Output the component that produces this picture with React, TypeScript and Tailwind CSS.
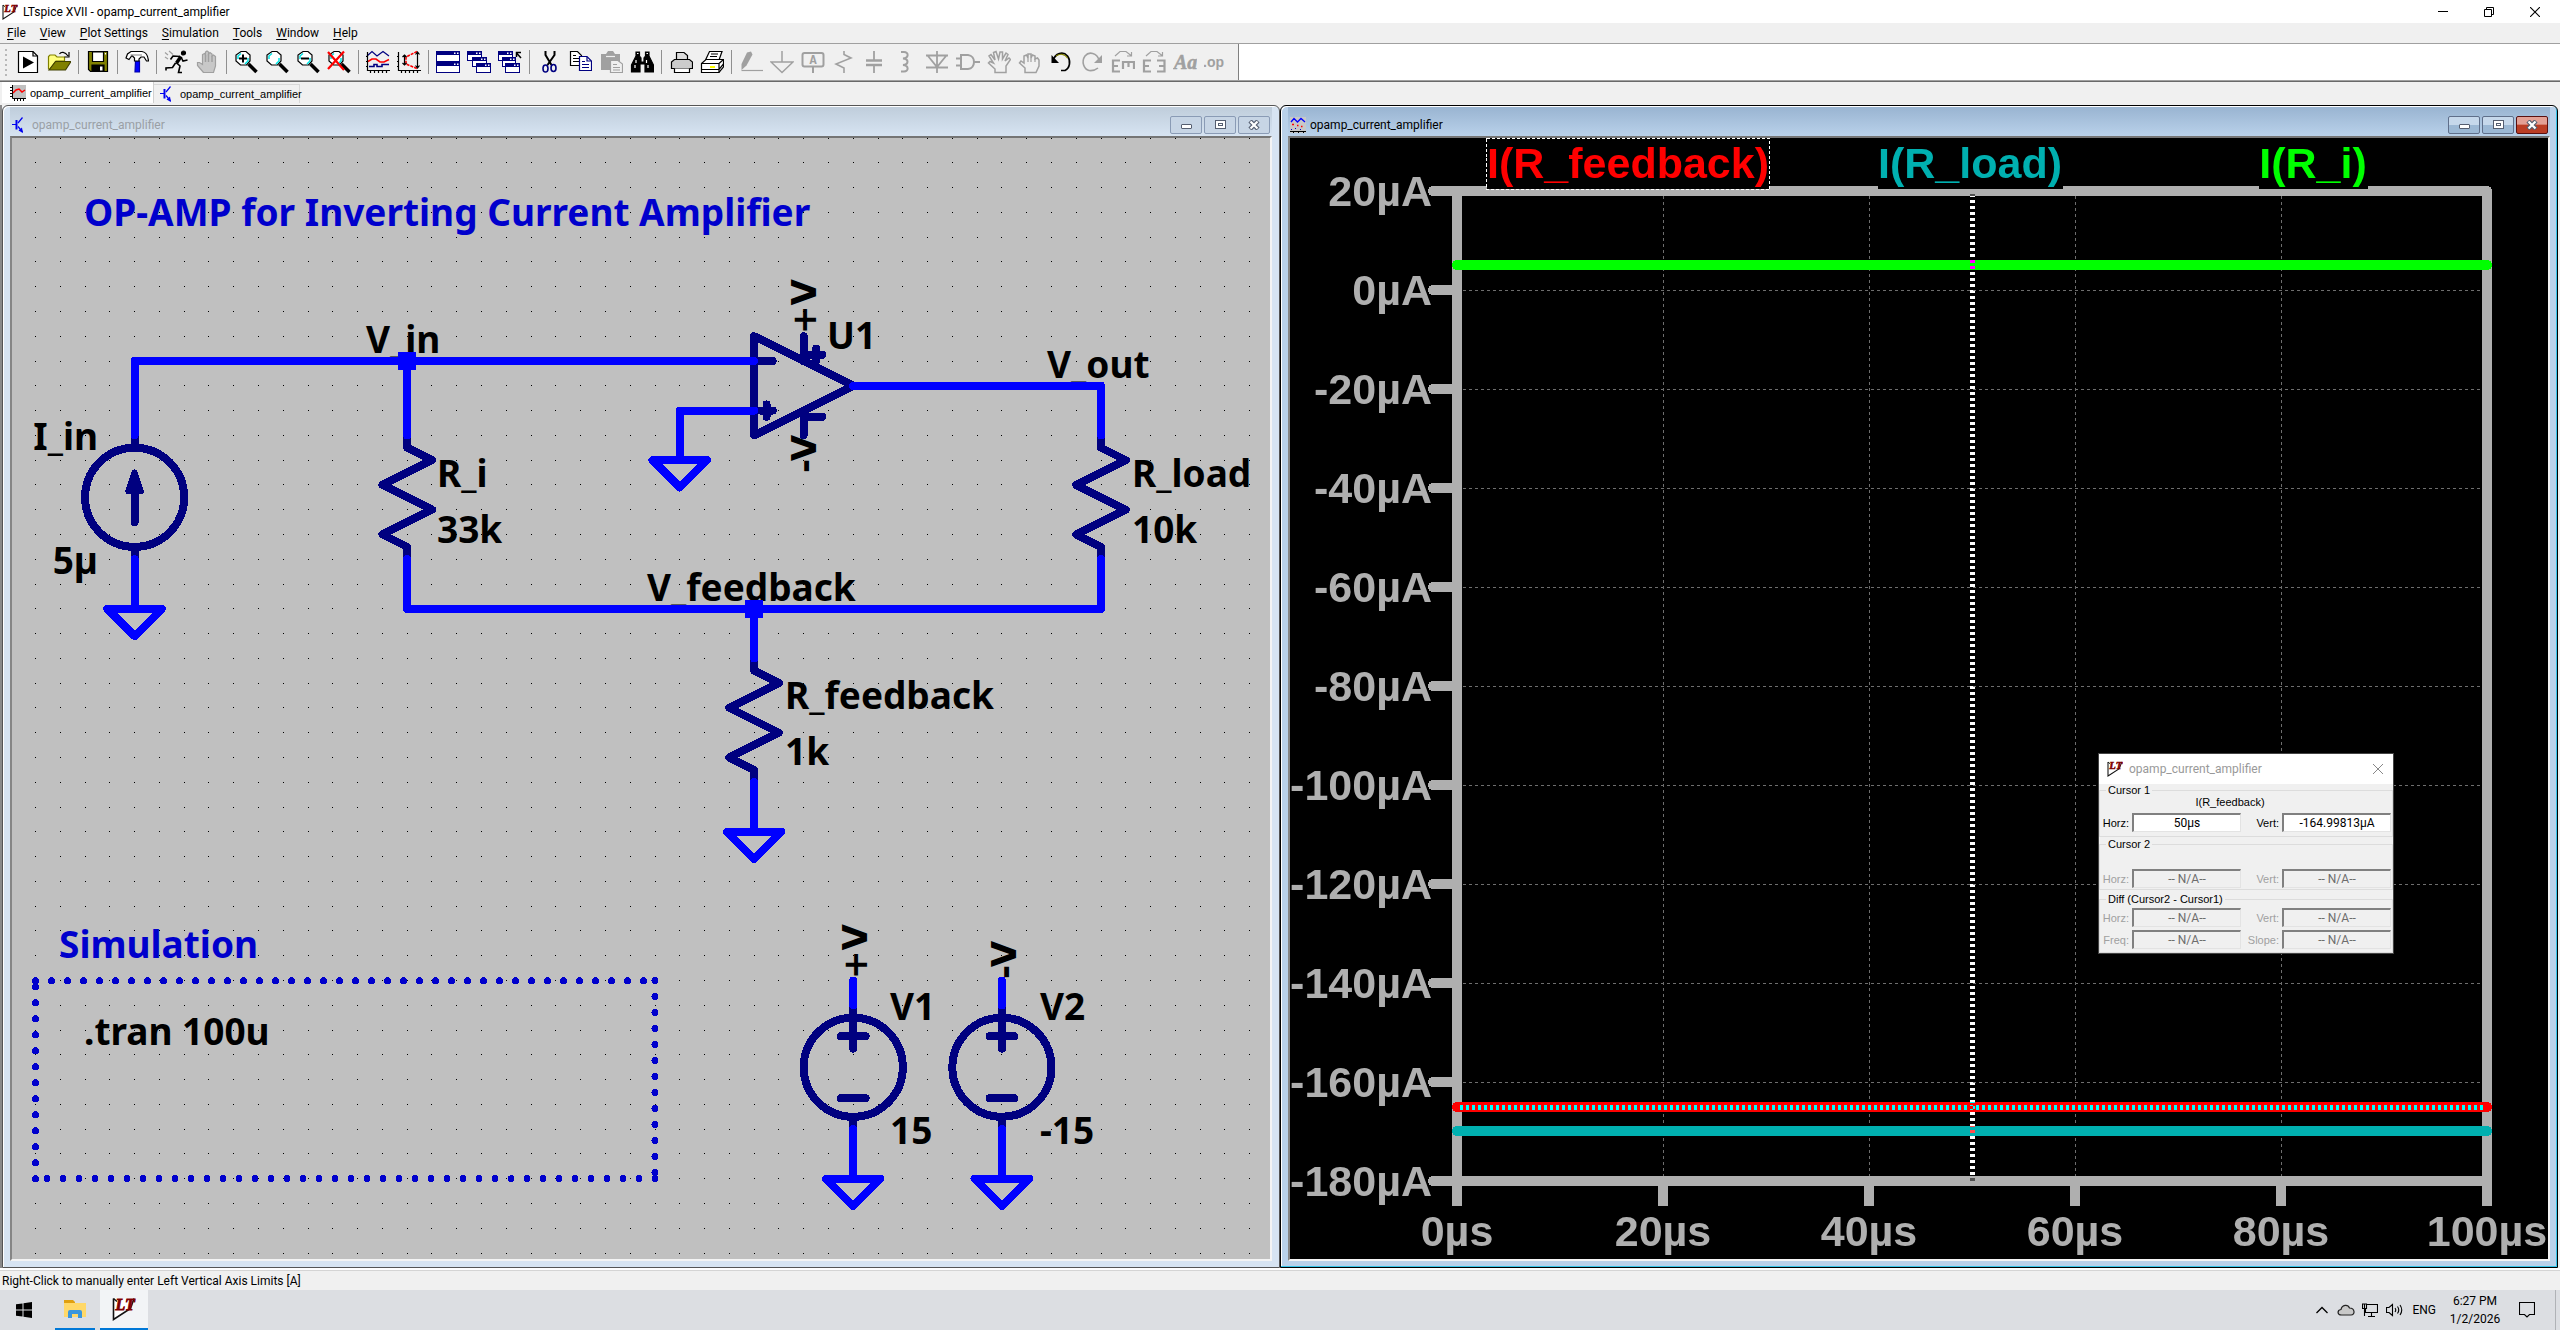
import type { ReactNode } from 'react'

const UI = "font-['Roboto','Open_Sans',sans-serif]"
const SMALL = "font-['Liberation_Sans',sans-serif] text-[11px] leading-[12px]"

/* ---------- Icons ---------- */

function Icon({ children }: { children: ReactNode }) {
  return (
    <svg viewBox="0 0 24 24" className="h-6 w-6 shrink-0" fill="none" stroke="#000" strokeWidth="1.2">
      {children}
    </svg>
  )
}

function LtLogo({ className }: { className: string }) {
  return (
    <svg viewBox="0 0 24 24" className={className} fill="none">
      <path d="M1.500 1.500V22.500L18.500 11.500L22 1.500" stroke="#111" strokeWidth="1.600" fill="#fff" />
      <path d="M1.500 1.500L5 4.500" stroke="#111" strokeWidth="1.400" />
      <text
        x="3.500"
        y="12.500"
        fill="#800000"
        stroke="#800000"
        strokeWidth="0.800"
        fontSize="16"
        fontWeight="700"
        fontStyle="italic"
        fontFamily="Liberation Serif, serif"
      >
        LT
      </text>
    </svg>
  )
}

function TransistorIcon() {
  return (
    <svg viewBox="0 0 16 16" className="h-4 w-4 shrink-0" fill="none" stroke="#0000f0" strokeWidth="1.2">
      <path d="M0 7.500H4M6 6L10.500 0.500M6 9.500L10.500 15" />
      <path d="M4.500 3V12.500" strokeWidth="2" />
      <path d="M11 16L6.500 13.500L10 10.500Z" fill="#0000f0" stroke="none" />
    </svg>
  )
}

function PlotTabIcon() {
  return (
    <svg viewBox="0 0 16 16" className="h-4 w-4 shrink-0" fill="none">
      <path d="M2 0H16V13H2Z" fill="#c0c0c0" />
      <path d="M2.500 0V13.500H16M0 2.500H2M0 5.500H2M0 8.500H2M0 11.500H2M4.500 14V16M7.500 14V16M10.500 14V16M13.500 14V16" stroke="#000" />
      <path d="M3 8L6 5L9 4L12 7L15 5" stroke="#f00" strokeWidth="1.5" />
    </svg>
  )
}

function PlotDocIcon() {
  return (
    <svg viewBox="0 0 16 16" className="h-4 w-4 shrink-0" fill="none">
      <path d="M0 0H16V16H0Z" fill="#c8c8c8" />
      <path d="M1 5L4 1.500L7.500 5L11 1.500L15 5" stroke="#00f" strokeWidth="1.300" />
      <path d="M2 7.500H4M7 8.500H8.500M11 9.500H12.500" stroke="#f00" strokeWidth="1.500" />
      <path d="M1 12.500H2M5 11.500H6M10 12.500H11" stroke="#00c" />
      <path d="M0 14.500H16M3.500 15V16M8.500 15V16M13.500 15V16" stroke="#000" />
    </svg>
  )
}

const GRAY = '#a0a0a0'

function Lens({ children }: { children?: ReactNode }) {
  return (
    <Icon>
      <path d="M7 1.500H12L16 5V11L12.500 15H6.500L2 11V5Z" fill="#fff" />
      <path d="M4 9V6L7 3.500M14 8V11L11 14" stroke="#00e5e5" strokeWidth="1.5" />
      <path d="M14.500 14L22.500 22" strokeWidth="3.500" />
      {children}
    </Icon>
  )
}

function MiniWindow({ x, y, w = 14, h = 9 }: { x: number; y: number; w?: number; h?: number }) {
  return (
    <g transform={`translate(${x} ${y})`} stroke="none">
      <rect width={w} height={h} fill="#000080" />
      <rect x="1" y="4" width={w - 2} height={h - 5} fill="#fff" />
      <path d={`M${w - 6} 1.500h1.500v1.500h-1.500zM${w - 3} 1.500h1.500v1.500h-1.500z`} fill="#fff" />
    </g>
  )
}

type Tool = { name: string; icon: ReactNode; disabled?: boolean }

const toolGroups: Tool[][] = [
  [
    {
      name: 'Run',
      icon: (
        <Icon>
          <path d="M2.500 1.500H17L21.500 6V22.500H2.500Z" fill="#fff" />
          <path d="M17 1.500V6H21.500" />
          <path d="M7 6.500V18.500L18 12.500Z" fill="#000" stroke="none" />
        </Icon>
      ),
    },
    {
      name: 'Open',
      icon: (
        <Icon>
          <path d="M1.500 19V6.500L3 5H8L10 7H17.500V11H9L3 19Z" fill="#ffff80" stroke="#808000" />
          <path d="M2 20L8.500 11.500H24L18.500 20Z" fill="#808000" stroke="#404000" />
          <path d="M12.500 4C14 1.500 18 1.500 21 6M22 2V7H17.500" />
        </Icon>
      ),
    },
  ],
  [
    {
      name: 'Save',
      icon: (
        <Icon>
          <path d="M2.500 1.500H21.500V21.500H4.500L2.500 19.500Z" fill="#808000" />
          <path d="M6.500 2H17.500V11.500H6.500Z" fill="#fff" />
          <path d="M6 15H18V21.500H6Z" fill="#000" />
          <path d="M14 16.500H16.500V20.500H14Z" fill="#fff" stroke="none" />
          <path d="M19.500 3V4.500" stroke="#fff" />
        </Icon>
      ),
    },
  ],
  [
    {
      name: 'Control Panel',
      icon: (
        <Icon>
          <path d="M10.500 11H14.500V22H10Z" fill="#00f" stroke="#00a" />
          <path d="M1 8L2.500 4L6 1.500H17C20.500 2 23 5 23.500 11H21.500L19 7H16L14 9V11H9.500V8L7 5.500L4 9.500Z" fill="#fff" />
          <path d="M5.500 5H17" stroke="#999" />
        </Icon>
      ),
    },
  ],
  [
    {
      name: 'Run simulation',
      icon: (
        <Icon>
          <circle cx="19.500" cy="3" r="2" fill="#000" />
          <path d="M17 6.500L12.500 13" strokeWidth="3.500" />
          <path d="M16 6.500L9 6L6.500 9.500M17 7L19 11L23.500 10M12 12.500L16 16L14.500 22.500H18M11.500 13L8.500 17.500L2 18V20.500" strokeWidth="1.600" />
          <path d="M1 2.500L4 5M5 1L9 4.500M1 7L4 9" stroke={GRAY} />
        </Icon>
      ),
    },
    {
      name: 'Halt',
      disabled: true,
      icon: (
        <Icon>
          <path
            d="M8.500 22.500L2.500 15.500V12.500H4.500L7.500 14.500V4.500L9.500 3.500L10.500 5V2L12 1L13.500 2V4L15 2.500L17 4V6L18.500 5L20.500 6.500V16L18.500 22.500Z"
            fill="#c8c8c8"
            stroke={GRAY}
          />
          <path d="M10.500 5V12M13.500 4V12M17 6V12" stroke={GRAY} strokeWidth="1.500" />
        </Icon>
      ),
    },
  ],
  [
    {
      name: 'Zoom in',
      icon: (
        <Lens>
          <path d="M9 4.500V12.500M5 8.500H13" strokeWidth="2" />
        </Lens>
      ),
    },
    { name: 'Pan', icon: <Lens /> },
    {
      name: 'Zoom back',
      icon: (
        <Lens>
          <path d="M5 8.500H13" strokeWidth="2" />
        </Lens>
      ),
    },
    {
      name: 'Zoom full extents',
      icon: (
        <Lens>
          <path d="M1 2L17 20M17 1.500L1 19" stroke="#f00" strokeWidth="2.200" />
        </Lens>
      ),
    },
  ],
  [
    {
      name: 'Autorange',
      icon: (
        <Icon>
          <path d="M1 6L6 1.500L11 6L17 1.500L23 6" stroke="#000080" />
          <path d="M2 11.500L6 9L10 9L14 12H18L23 9.500" stroke="#f00" strokeWidth="1.600" />
          <path d="M3 16.500H8V14.500H11V16.500H16V14.500H23" stroke="#000080" strokeWidth="1.600" />
          <path d="M1.500 2V20.500H24M0 6.500H2M0 11.500H2M0 16.500H2M4.500 21V23M8.500 21V23M12.500 21V23M16.500 21V23M20.500 21V23" />
        </Icon>
      ),
    },
    {
      name: 'Fit vertical',
      icon: (
        <Icon>
          <path d="M1.500 2V20.500H24M0 6.500H2M0 11.500H2M0 16.500H2M4.500 21V23M8.500 21V23M12.500 21V23M16.500 21V23M20.500 21V23" />
          <path d="M20 1.500L9 7V14L20 18.500" stroke="#f00" strokeWidth="1.600" strokeDasharray="3 1" />
          <path d="M7.500 5V15M5.500 7L7.500 5L9.500 7M5.500 13L7.500 15L9.500 13M20.500 2V18M18.500 4.500L20.500 2L22.500 4.500M18.500 15.500L20.500 18L22.500 15.500" />
        </Icon>
      ),
    },
  ],
  [
    {
      name: 'Tile',
      icon: (
        <Icon>
          <MiniWindow x={0} y={1} w={24} h={11} />
          <MiniWindow x={0} y={12} w={24} h={11} />
        </Icon>
      ),
    },
    {
      name: 'Cascade',
      icon: (
        <Icon>
          <MiniWindow x={0} y={1} w={15} h={10} />
          <MiniWindow x={5} y={7} w={15} h={10} />
          <MiniWindow x={9} y={13} w={15} h={10} />
        </Icon>
      ),
    },
    {
      name: 'Close all',
      icon: (
        <Icon>
          <MiniWindow x={0} y={1} w={15} h={10} />
          <MiniWindow x={4} y={7} w={14} h={10} />
          <MiniWindow x={7} y={13} w={15} h={10} />
          <path d="M23 8L18.500 3M18.500 7V2.500H23" strokeWidth="1.500" />
        </Icon>
      ),
    },
  ],
  [
    {
      name: 'Cut',
      icon: (
        <Icon>
          <path d="M8.500 1V5L14.500 15M17.500 1V5L10.500 15" strokeWidth="2" />
          <ellipse cx="8.500" cy="18.500" rx="2.500" ry="3.500" stroke="#000080" strokeWidth="1.600" />
          <ellipse cx="16.500" cy="18" rx="2.500" ry="3.500" stroke="#000080" strokeWidth="1.600" />
        </Icon>
      ),
    },
    {
      name: 'Copy',
      icon: (
        <Icon>
          <path d="M2.500 1.500H9.500L13.500 5.500V15.500H2.500Z" fill="#fff" />
          <path d="M5 5.500H8M5 8.500H11M5 11.500H11" />
          <path d="M11.500 6.500H19L23.500 11V20.500H11.500Z" fill="#fff" stroke="#000080" />
          <path d="M19 7V11H23M14 11.500H17M14 14.500H21M14 17.500H21" stroke="#000080" />
        </Icon>
      ),
    },
    {
      name: 'Paste',
      disabled: true,
      icon: (
        <Icon>
          <path d="M2 4H7L9 1H14L16 4H21V20H2Z" fill={GRAY} stroke="none" />
          <path d="M7 6.500H16" stroke="#eee" />
          <path d="M11.500 10.500H19L23.500 14V22.500H11.500Z" fill="#f0f0f0" stroke={GRAY} />
          <path d="M14 14.500H18M14 17.500H21M14 20H21" stroke={GRAY} />
        </Icon>
      ),
    },
    {
      name: 'Find',
      icon: (
        <Icon>
          <path d="M6 2H9.500V6L11 8V12H14V8L15.500 6V2H19V6L23.500 15V22H15V14H10V22H1.500V15L6 6Z" fill="#000" />
          <path d="M7 3.500H8.500M16.500 3.500H18M6 10V13M5 15V18M16.500 10V13M18 15V18" stroke="#fff" />
        </Icon>
      ),
    },
  ],
  [
    {
      name: 'Print preview',
      icon: (
        <Icon>
          <path d="M7.500 10V2.500H15L18.500 5.500V10" fill="#ddd" />
          <path d="M2.500 12L5.500 9.500H20.500L23.500 12V18.500H2.500Z" fill="#ccc" />
          <path d="M5.500 18.500V22.500H20.500V18.500" fill="#fff" />
        </Icon>
      ),
    },
    {
      name: 'Print',
      icon: (
        <Icon>
          <path d="M5.500 10L9.500 1.500H22L19 10" fill="#fff" />
          <path d="M11 4H18M10 6.500H17" />
          <path d="M1.500 13.500L6 9.500H23.500V17L19 22.500H1.500Z" fill="#fff" />
          <path d="M1.500 13.500H19V22.500M19 13.500L23.500 9.500M1.500 19.500H19L23.500 14" />
          <path d="M10 17H15" stroke="#ff0" strokeWidth="2" />
        </Icon>
      ),
    },
  ],
  [
    {
      name: 'Wire',
      disabled: true,
      icon: (
        <Icon>
          <path d="M2.500 20V14L8 2.500L12 1.500L13.500 4.500L7.500 15.500Z" fill={GRAY} stroke="none" />
          <path d="M2.500 20.500H24" stroke={GRAY} />
        </Icon>
      ),
    },
    {
      name: 'Ground',
      disabled: true,
      icon: (
        <Icon>
          <path d="M12 1V12M1 12H23L12 22.500Z" stroke={GRAY} strokeWidth="1.500" />
        </Icon>
      ),
    },
    {
      name: 'Label net',
      disabled: true,
      icon: (
        <Icon>
          <rect x="1.500" y="3" width="21" height="13.500" rx="2" stroke={GRAY} strokeWidth="2" />
          <path d="M12 16V23" stroke={GRAY} strokeWidth="2" />
          <text x="12" y="14" textAnchor="middle" fill={GRAY} stroke="none" fontSize="12" fontWeight="700" fontFamily="Liberation Mono, monospace">
            A
          </text>
        </Icon>
      ),
    },
    {
      name: 'Resistor',
      disabled: true,
      icon: (
        <Icon>
          <path d="M12 1V4.500L19 8L4 14L12 18V23" stroke={GRAY} strokeWidth="1.600" />
        </Icon>
      ),
    },
    {
      name: 'Capacitor',
      disabled: true,
      icon: (
        <Icon>
          <path d="M11 1V10M11 15V23" stroke={GRAY} strokeWidth="1.800" />
          <path d="M3 10.500H19M3 15H19" stroke={GRAY} strokeWidth="2.500" />
        </Icon>
      ),
    },
    {
      name: 'Inductor',
      disabled: true,
      icon: (
        <Icon>
          <path d="M7 2H10C15 2 15 8 9 8.500C15 9 15 14.500 9 15C15 15.500 15 21.500 10 21.500H7" stroke={GRAY} strokeWidth="2" />
        </Icon>
      ),
    },
    {
      name: 'Diode',
      disabled: true,
      icon: (
        <Icon>
          <path d="M12 1V23M1 5.500H23M3 6L12 17L21 6M1 17.500H23" stroke={GRAY} strokeWidth="1.800" />
        </Icon>
      ),
    },
    {
      name: 'Component',
      disabled: true,
      icon: (
        <Icon>
          <path d="M5 5H12C20 6 20 18 12 19H5ZM0 8.500H5M0 15.500H5M18 12H24" stroke={GRAY} strokeWidth="2" />
        </Icon>
      ),
    },
    {
      name: 'Move',
      disabled: true,
      icon: (
        <Icon>
          <path
            d="M8 22.500V19L1.500 13L3 11.500L6.500 13L2 6L4 4.500L8 10L6.500 2.500L9 1.500L11.500 9L13 2H15.500V9L19 3L21 4.500L18 11L22 8L23.500 9.500L19 16V22.500Z"
            stroke={GRAY}
            strokeWidth="1.500"
          />
        </Icon>
      ),
    },
    {
      name: 'Drag',
      disabled: true,
      icon: (
        <Icon>
          <path
            d="M7 22.500V18L1.500 13L3 11L6 13V6L8.500 5L10 8V4H13V8L14.500 5L17 6V9L19.500 8L21 10V16L18 22.500Z"
            stroke={GRAY}
            strokeWidth="1.500"
          />
          <path d="M10 8V12M13 8V12M17 9V12" stroke={GRAY} />
        </Icon>
      ),
    },
    {
      name: 'Undo',
      icon: (
        <Icon>
          <path d="M4 11C6 3 14 1 18.500 6C22 11 21 18 16 20.500H12" strokeWidth="1.700" />
          <path d="M7 6C11 3 16 4 18.500 8" stroke="#808000" />
          <path d="M2.500 5V13H10Z" fill="#000" stroke="none" />
        </Icon>
      ),
    },
    {
      name: 'Redo',
      disabled: true,
      icon: (
        <Icon>
          <path d="M19 10C17 3 9 1 5 6C1 12 4 19 9 20.500C13 21 15 20.500 18 18" stroke={GRAY} strokeWidth="1.600" />
          <path d="M22 5V13H14Z" fill={GRAY} stroke="none" />
        </Icon>
      ),
    },
    {
      name: 'Mirror',
      disabled: true,
      icon: (
        <Icon>
          <path d="M9 10.500H2V21.500H9M2 16H7M12 19V12H23V19M17.500 12V17" stroke={GRAY} strokeWidth="2.200" />
          <path d="M4 6L9 1.500H15L20 5.500M20.500 2V6H16" stroke={GRAY} />
        </Icon>
      ),
    },
    {
      name: 'Rotate',
      disabled: true,
      icon: (
        <Icon>
          <path d="M9 10.500H2V21.500H9M2 16H7M15 10.500H22.500V21.500H15M22 16H17" stroke={GRAY} strokeWidth="2.200" />
          <path d="M4 6L9 1.500H15L20 5.500M20.500 2V6H16" stroke={GRAY} />
        </Icon>
      ),
    },
    {
      name: 'Text',
      disabled: true,
      icon: (
        <Icon>
          <text x="1" y="19" fill={GRAY} stroke={GRAY} strokeWidth="0.500" fontSize="20" fontWeight="700" fontStyle="italic" fontFamily="Liberation Serif, serif">
            Aa
          </text>
        </Icon>
      ),
    },
    {
      name: 'SPICE directive',
      disabled: true,
      icon: (
        <Icon>
          <text x="-1" y="17" fill={GRAY} stroke="none" fontSize="14" fontWeight="700" fontFamily="Liberation Sans, sans-serif">
            .op
          </text>
        </Icon>
      ),
    },
  ],
]

/* ---------- Top chrome ---------- */

const menus = ['File', 'View', 'Plot Settings', 'Simulation', 'Tools', 'Window', 'Help']

function TitleBar() {
  return (
    <header className="flex h-[23px] items-center bg-white pl-[2px]">
      <LtLogo className="h-4 w-4" />
      <h1 className={`${UI} ml-[5px] flex-1 text-[12px] leading-4 text-black`}>LTspice XVII - opamp_current_amplifier</h1>
      <button aria-label="Minimize" className="flex h-[21px] w-[46px] items-center justify-center">
        <span className="h-px w-[10px] bg-black" />
      </button>
      <button aria-label="Restore" className="flex h-[21px] w-[46px] items-center justify-center">
        <svg viewBox="0 0 10 10" className="h-[10px] w-[10px]" fill="none" stroke="#000">
          <path d="M0.500 2.500H7.500V9.500H0.500ZM2.500 2.500V0.500H9.500V7.500H7.500" />
        </svg>
      </button>
      <button aria-label="Close" className="mr-[2px] flex h-[21px] w-[46px] items-center justify-center">
        <svg viewBox="0 0 10 10" className="h-[10px] w-[10px]" stroke="#000" strokeWidth="1.100">
          <path d="M0 0L10 10M10 0L0 10" />
        </svg>
      </button>
    </header>
  )
}

function MenuBar() {
  return (
    <nav className={`${UI} flex h-[21px] items-center gap-[14px] border-b border-[#a0a0a0] bg-[#f0f0f0] pl-[7px] text-[12px] leading-4`}>
      {menus.map((menu) => (
        <button key={menu} className="text-black">
          <span className="underline underline-offset-2">{menu[0]}</span>
          {menu.slice(1)}
        </button>
      ))}
    </nav>
  )
}

function Toolbar() {
  return (
    <div className="h-9 bg-white">
      <div className="flex h-9 w-fit items-center border-r border-[#808080] bg-[#f0f0f0] pr-[3px] pl-[5px]">
        <span className="mr-[9px] h-[27px] w-[2px] bg-[repeating-linear-gradient(#b8b8b8_0_2px,transparent_2px_5px)]" />
        {toolGroups.map((group, i) => (
          <div key={i} className="flex items-center">
            {i > 0 && <span className="mr-[7px] h-6 w-px bg-[#909090]" />}
            {group.map((tool) => (
              <button key={tool.name} aria-label={tool.name} disabled={tool.disabled} className="flex w-[31px]">
                {tool.icon}
              </button>
            ))}
          </div>
        ))}
      </div>
    </div>
  )
}

function DocumentTabs() {
  return (
    <div className={`${SMALL} flex h-[23px] items-start bg-[#f0f0f0] pl-[2px] text-black`}>
      <button className="flex h-[21px] w-[152px] items-center gap-1 border-r border-[#d0d0d0] bg-white pl-2">
        <PlotTabIcon />
        opamp_current_amplifier
      </button>
      <button className="mt-[2px] flex h-[19px] w-[146px] items-center gap-1 border-t border-r border-[#d8d8d8] pl-[6px]">
        <TransistorIcon />
        opamp_current_amplifier
      </button>
    </div>
  )
}

/* ---------- Child windows ---------- */

type ChildWindowProps = { active?: boolean; icon: ReactNode; children: ReactNode }

function ChildWindow({ active, icon, children }: ChildWindowProps) {
  const frame = active
    ? 'border-black bg-[#b9d1ea] shadow-[inset_-1px_-1px_0_#35c4e8,inset_1px_1px_0_#fff]'
    : 'border-[#555] bg-[#d7e4f2] shadow-[inset_1px_1px_0_#fff]'
  const bar = active ? 'bg-linear-to-b from-[#99b4d1] to-[#b9d1ea]' : 'bg-linear-to-b from-[#bfcddb] to-[#d7e4f2]'
  const button = active
    ? 'border-[#5f6f8a] bg-linear-to-b from-[#c6d8eb] from-50% to-[#9cb8d4] to-50%'
    : 'border-[#8a9bb5] bg-[#c7d5e5]'
  const close = active ? 'border-[#5a1010] bg-linear-to-b from-[#e3a095] from-45% to-[#bb3d24] to-50%' : button

  return (
    <section className={`flex min-w-0 flex-1 flex-col rounded-t-md border px-[7px] pb-[6px] ${frame}`}>
      <div className={`mt-px flex h-[29px] items-center pt-[6px] pl-[2px] ${bar}`}>
        <span className="flex-none">{icon}</span>
        <h2 className={`${UI} ml-1 flex-1 truncate text-[12px] leading-4 ${active ? 'text-black' : 'text-[#9a9fa5]'}`}>
          opamp_current_amplifier
        </h2>
        <div className="mr-[2px] flex gap-[2px]">
          <button aria-label="Minimize window" className={`flex h-[18px] w-8 items-center justify-center rounded-xs border ${button}`}>
            <span className="mt-1 h-[5px] w-[11px] rounded-[1px] border border-[#555e70] bg-white" />
          </button>
          <button aria-label="Maximize window" className={`flex h-[18px] w-8 items-center justify-center rounded-xs border ${button}`}>
            <span className="flex h-[9px] w-[11px] items-center justify-center border border-[#555e70] bg-white">
              <span className="h-[3px] w-[5px] border border-[#555e70]" />
            </span>
          </button>
          <button aria-label="Close window" className={`flex h-[18px] w-8 items-center justify-center rounded-xs border ${close}`}>
            <svg viewBox="0 0 12 10" className="h-[10px] w-3">
              <path d="M2 1L10 9M10 1L2 9" stroke="#555e70" strokeWidth="4.500" />
              <path d="M2.500 1.500L9.500 8.500M9.500 1.500L2.500 8.500" stroke="#fff" strokeWidth="2.200" />
            </svg>
          </button>
        </div>
      </div>
      <div className="relative min-h-0 flex-1 border-2 border-t-[#757575] border-r-[#f4f4f4] border-b-[#f4f4f4] border-l-[#858585]">
        {children}
      </div>
    </section>
  )
}

/* ---------- Schematic ---------- */

const WIRE = '#0000ff'
const PART = '#000080'
const STEP = 24.78
const gx = (i: number) => 23.5 + STEP * i
const gy = (j: number) => STEP * j

// points are grid pairs: [[col, row], ...]
function Trace({ points, color = WIRE, close }: { points: number[][]; color?: string; close?: boolean }) {
  const d = points.map(([x, y]) => `${gx(x)} ${gy(y)}`).join('L')
  return <path d={`M${d}${close ? 'Z' : ''}`} stroke={color} />
}

function Ground({ col, row }: { col: number; row: number }) {
  return <Trace points={[[col - 1.1, row], [col + 1.1, row], [col, row + 1.1]]} close />
}

function Resistor({ col, row }: { col: number; row: number }) {
  return (
    <Trace
      color={PART}
      points={[
        [col, row],
        [col, row + 0.5],
        [col + 1, row + 1],
        [col - 1, row + 2],
        [col + 1, row + 3],
        [col - 1, row + 4],
        [col, row + 4.5],
        [col, row + 5],
      ]}
    />
  )
}

function SourceBody({ col, row }: { col: number; row: number }) {
  return (
    <>
      <circle cx={gx(col)} cy={gy(row + 2.5)} r={STEP * 2} stroke={PART} />
      <Trace color={PART} points={[[col, row], [col, row + 0.5]]} />
      <Trace color={PART} points={[[col, row + 4.5], [col, row + 5]]} />
    </>
  )
}

function VoltageSource({ col, row }: { col: number; row: number }) {
  return (
    <>
      <SourceBody col={col} row={row} />
      <Trace color={PART} points={[[col - 0.5, row + 1.25], [col + 0.5, row + 1.25]]} />
      <Trace color={PART} points={[[col, row + 0.75], [col, row + 1.75]]} />
      <Trace color={PART} points={[[col - 0.5, row + 3.75], [col + 0.5, row + 3.75]]} />
    </>
  )
}

function Junction({ col, row }: { col: number; row: number }) {
  return <rect x={gx(col) - 9} y={gy(row) - 9} width="18" height="18" fill={WIRE} stroke="none" />
}

const labels = [
  { x: 72, y: 88, text: 'OP-AMP for Inverting Current Amplifier', color: '#0000cc' },
  { x: 47, y: 820, text: 'Simulation', color: '#0000cc' },
  { x: 354, y: 215, text: 'V_in' },
  { x: 815, y: 211, text: 'U1' },
  { x: 1035, y: 240, text: 'V_out' },
  { x: 1120, y: 349, text: 'R_load' },
  { x: 1120, y: 405, text: '10k' },
  { x: 425, y: 349, text: 'R_i' },
  { x: 425, y: 405, text: '33k' },
  { x: 86, y: 312, text: 'I_in', end: true },
  { x: 86, y: 436, text: '5µ', end: true },
  { x: 635, y: 463, text: 'V_feedback' },
  { x: 773, y: 571, text: 'R_feedback' },
  { x: 773, y: 627, text: '1k' },
  { x: 72, y: 907, text: '.tran 100u' },
  { x: 878, y: 882, text: 'V1' },
  { x: 878, y: 1006, text: '15' },
  { x: 1028, y: 882, text: 'V2' },
  { x: 1028, y: 1006, text: '-15' },
]

// supply flags read bottom to top
const flags = [
  { x: 804, y: 196, text: '+V' },
  { x: 804, y: 297, text: '-V', end: true },
  { x: 855, y: 841, text: '+V' },
  { x: 1004, y: 841, text: '-V' },
]

let gridDots = ''
for (let i = 0; i < 50; i++) {
  for (let j = 0; j < 46; j++) {
    gridDots += `M${Math.floor(gx(i))} ${Math.floor(gy(j))}h1v1h-1z`
  }
}

function Schematic() {
  return (
    <div className="h-full bg-[#c0c0c0]">
      <svg viewBox="0 0 1258 1121" preserveAspectRatio="xMinYMin meet" className="block h-full w-full" shapeRendering="crispEdges">
        <path d={gridDots} fill="#000" />

        <g fontFamily="Noto Sans, sans-serif" fontSize="37" fontWeight="700">
          {labels.map((l) => (
            <text key={l.text} x={l.x} y={l.y} fill={l.color ?? '#000'} textAnchor={l.end ? 'end' : 'start'}>
              {l.text}
            </text>
          ))}
        </g>
        <g fontFamily="DejaVu Sans, sans-serif" fontSize="34" fontWeight="700">
          {flags.map((f) => (
            <text key={`${f.x}-${f.y}`} transform={`translate(${f.x} ${f.y}) rotate(-90)`} textAnchor={f.end ? 'end' : 'start'}>
              {f.text}
            </text>
          ))}
        </g>

        <g fill="none" strokeWidth="8" strokeLinecap="round" strokeLinejoin="round">
          {/* current source */}
          <SourceBody col={4} row={12} />
          <Trace color={PART} points={[[4, 13.9], [4, 15.5]]} />
          <path
            d={`M${gx(4)} ${gy(13.5)}L${gx(4.25)} ${gy(14.25)}H${gx(3.75)}Z`}
            fill={PART}
            stroke={PART}
            strokeWidth="6"
          />

          <Resistor col={15} row={12} />
          <Resistor col={43} row={12} />
          <Resistor col={29} row={21} />
          <VoltageSource col={33} row={35} />
          <VoltageSource col={39} row={35} />

          {/* op-amp */}
          <Trace color={PART} points={[[29, 8], [33, 10], [29, 12]]} close />
          <Trace color={PART} points={[[29.25, 9], [29.75, 9]]} />
          <Trace color={PART} points={[[29.25, 11], [29.75, 11]]} />
          <Trace color={PART} points={[[29.5, 10.75], [29.5, 11.25]]} />
          <Trace color={PART} points={[[31, 8], [31, 9]]} />
          <Trace color={PART} points={[[31, 11], [31, 12]]} />
          <Trace color={PART} points={[[31.25, 8.75], [31.75, 8.75]]} />
          <Trace color={PART} points={[[31.5, 8.5], [31.5, 9]]} />
          <Trace color={PART} points={[[31.25, 11.25], [31.75, 11.25]]} />

          {/* wires */}
          <Trace points={[[4, 12], [4, 9], [29, 9]]} />
          <Trace points={[[15, 9], [15, 12]]} />
          <Trace points={[[29, 11], [26, 11], [26, 13]]} />
          <Trace points={[[33, 10], [43, 10], [43, 12]]} />
          <Trace points={[[43, 17], [43, 19], [15, 19], [15, 17]]} />
          <Trace points={[[29, 19], [29, 21]]} />
          <Trace points={[[29, 26], [29, 28]]} />
          <Trace points={[[4, 17], [4, 19]]} />
          <Trace points={[[33, 34], [33, 35]]} />
          <Trace points={[[39, 34], [39, 35]]} />
          <Trace points={[[33, 40], [33, 42]]} />
          <Trace points={[[39, 40], [39, 42]]} />

          <Ground col={4} row={19} />
          <Ground col={26} row={13} />
          <Ground col={29} row={28} />
          <Ground col={33} row={42} />
          <Ground col={39} row={42} />
          <Junction col={15} row={9} />
          <Junction col={29} row={19} />

          {/* dotted frame around the directive, each side dotted from its own corner */}
          <g stroke="#0000cc" strokeWidth="7" strokeDasharray="0 16">
            <path d={`M${gx(0)} ${gy(34)}H${gx(25)}`} />
            <path d={`M${gx(25)} ${gy(34)}V${gy(42)}`} />
            <path d={`M${gx(25)} ${gy(42)}H${gx(0)}`} />
            <path d={`M${gx(0)} ${gy(42)}V${gy(34)}`} />
          </g>
        </g>
      </svg>
    </div>
  )
}

/* ---------- Waveform ---------- */

const AXIS = '#afafaf'
const LEFT = 167
const RIGHT = 1197
const TOP = 53
const BOTTOM = 1043

const amps = [20, 0, -20, -40, -60, -80, -100, -120, -140, -160, -180]
const times = [0, 20, 40, 60, 80, 100]
const ampY = (v: number) => TOP + (20 - v) * 4.95
const timeX = (t: number) => LEFT + t * 10.3

const traces = [
  { name: 'I(R_feedback)', value: -165, color: '#ff0000', x: 338, width: 283 },
  { name: 'I(R_load)', value: -169.9, color: '#00b0b0', x: 680, width: 185 },
  { name: 'I(R_i)', value: 5, color: '#00ff00', x: 1023, width: 109 },
]

function Waveform() {
  return (
    <div className="h-full bg-black">
      <svg viewBox="0 0 1258 1121" preserveAspectRatio="xMinYMin meet" className="isolate block h-full w-full" shapeRendering="crispEdges">
        <rect width="1258" height="1121" fill="#000" />

        <g stroke="#6e6e6e" strokeDasharray="3 3">
          {amps.slice(1, -1).map((v) => (
            <path key={v} d={`M173 ${ampY(v) + 0.5}H1190`} />
          ))}
          {times.slice(1, -1).map((t) => (
            <path key={t} d={`M${timeX(t) + 0.5} 58V1038`} />
          ))}
        </g>

        <g stroke={AXIS} strokeWidth="10" fill="none">
          <path d={`M${LEFT} ${TOP}H${RIGHT}V1068`} strokeLinejoin="round" />
          <path d={`M${LEFT} ${TOP}V1068M${LEFT} ${BOTTOM}H${RIGHT}`} />
          {amps.map((v) => (
            <path key={v} d={`M143 ${ampY(v)}H${LEFT}`} strokeLinecap="round" />
          ))}
          {times.map((t) => (
            <path key={t} d={`M${timeX(t)} ${BOTTOM}V1068`} />
          ))}
        </g>

        <g fontFamily="Liberation Sans, sans-serif" fontSize="43" fontWeight="700" fill={AXIS}>
          {amps.map((v) => (
            <text key={v} x="142" y={ampY(v) + 15} textAnchor="end">
              {v}µA
            </text>
          ))}
          {times.map((t) => (
            <text key={t} x={timeX(t)} y="1108" textAnchor="middle">
              {t}µs
            </text>
          ))}
          {traces.map((t) => (
            <g key={t.name}>
              <rect x={t.x - t.width / 2} y="0" width={t.width} height="51" fill="#000" />
              <text x={t.x} y="40" fill={t.color} textAnchor="middle">
                {t.name}
              </text>
            </g>
          ))}
        </g>
        <rect x="196.500" y="0.500" width="283" height="51" fill="none" stroke="#fff" strokeDasharray="3 2" />

        {traces.map((t) => (
          <path
            key={t.name}
            d={`M${LEFT} ${Math.round(ampY(t.value))}H${RIGHT}`}
            stroke={t.color}
            strokeWidth="10"
            strokeLinecap="round"
          />
        ))}

        {/* attached cursor, drawn inverted over whatever lies beneath */}
        <path d="M170 969.500H1194" stroke="#fff" strokeWidth="5" strokeDasharray="3 3" className="mix-blend-difference" />
        <path d={`M682.500 56V${BOTTOM}`} stroke="#fff" strokeWidth="5" strokeDasharray="3 3" className="mix-blend-difference" />
      </svg>
      <CursorDialog />
    </div>
  )
}

type Reading = { id: string; label: string; value?: string }

function Readings({ items }: { items: Reading[] }) {
  return (
    <div className="grid grid-cols-[29px_109px_35px_109px] items-center gap-[3px]">
      {items.map(({ id, label, value }) => (
        <div key={id} className="contents">
          <label htmlFor={id} className={`text-right ${value ? 'text-black' : 'text-[#a0a0a0]'}`}>
            {label}
          </label>
          <input
            id={id}
            readOnly
            disabled={!value}
            defaultValue={value ?? '-- N/A--'}
            className={`${UI} h-[19px] w-full border border-t-2 border-l-2 border-t-[#808080] border-r-[#e3e3e3] border-b-[#e3e3e3] border-l-[#808080] text-center text-[12px] leading-4 ${
              value ? 'bg-white text-black' : 'bg-[#f0f0f0] text-[#6d6d6d]'
            }`}
          />
        </div>
      ))}
    </div>
  )
}

function CursorDialog() {
  return (
    <div role="dialog" aria-label="Cursor readout" className={`${SMALL} absolute top-[615px] right-[154px] w-[296px] border border-[#444] bg-[#f0f0f0] text-black`}>
      <div className="flex h-[30px] items-center bg-white pr-[9px] pl-2">
        <LtLogo className="h-4 w-4" />
        <h3 className={`${UI} ml-[6px] flex-1 text-[12px] leading-4 text-[#999]`}>opamp_current_amplifier</h3>
        <button aria-label="Close cursor readout">
          <svg viewBox="0 0 12 12" className="h-3 w-3" stroke="#888">
            <path d="M1 1L11 11M11 1L1 11" />
          </svg>
        </button>
      </div>
      <fieldset className="border border-[#dcdcdc] pb-1">
        <legend className="ml-[6px] px-[2px]">Cursor 1</legend>
        <p className="mb-[5px] pr-[32px] text-center">I(R_feedback)</p>
        <Readings
          items={[
            { id: 'c1-horz', label: 'Horz:', value: '50µs' },
            { id: 'c1-vert', label: 'Vert:', value: '-164.99813µA' },
          ]}
        />
      </fieldset>
      <fieldset className="mt-px border border-[#dcdcdc] pt-[19px] pb-px">
        <legend className="ml-[6px] px-[2px]">Cursor 2</legend>
        <Readings
          items={[
            { id: 'c2-horz', label: 'Horz:' },
            { id: 'c2-vert', label: 'Vert:' },
          ]}
        />
      </fieldset>
      <fieldset className="mt-[3px] border border-[#dcdcdc] pt-[3px] pb-[3px]">
        <legend className="ml-[6px] px-[2px]">Diff (Cursor2 - Cursor1)</legend>
        <Readings
          items={[
            { id: 'd-horz', label: 'Horz:' },
            { id: 'd-vert', label: 'Vert:' },
            { id: 'd-freq', label: 'Freq:' },
            { id: 'd-slope', label: 'Slope:' },
          ]}
        />
      </fieldset>
    </div>
  )
}

/* ---------- Taskbar ---------- */

function Taskbar() {
  return (
    <footer className={`${UI} flex h-10 items-stretch bg-[#dcdee2] text-[12px] leading-[18px] text-black`}>
      <button aria-label="Start" className="flex w-12 items-center justify-center">
        <svg viewBox="0 0 16 16" className="h-4 w-4">
          <path d="M0 2.300L6.500 1.400V7.500H0ZM7.500 1.200L16 0V7.500H7.500ZM0 8.500H6.500V14.600L0 13.700ZM7.500 8.500H16V16L7.500 14.800Z" />
        </svg>
      </button>
      <button aria-label="File Explorer" className="ml-[7px] flex w-10 items-center border-b-2 border-[#0078d7] pl-[9px]">
        <svg viewBox="0 0 22 18" className="h-[18px] w-[22px]">
          <path d="M0 0H9L11 2V6H0Z" fill="#e0a010" />
          <path d="M0 3H22V17H0Z" fill="#ffd868" />
          <path d="M4 18V12Q4 10 6 10H16Q18 10 18 12V18H14V14H8V18Z" fill="#3a96dd" />
        </svg>
      </button>
      <button aria-label="LTspice" className="ml-[5px] flex w-12 items-center justify-center border-b-2 border-[#0078d7] bg-[#f2f4f6]">
        <LtLogo className="h-6 w-6" />
      </button>
      <div className="flex-1" />
      <button aria-label="Show hidden icons" className="mr-[9px] flex items-center">
        <svg viewBox="0 0 12 8" className="h-2 w-3" fill="none" stroke="#000" strokeWidth="1.300">
          <path d="M0.500 7L6 1.500L11.500 7" />
        </svg>
      </button>
      <button aria-label="OneDrive" className="mr-[7px] flex items-center">
        <svg viewBox="0 0 18 12" className="h-3 w-[18px]">
          <path d="M4.500 11C0 11 0 6 4 5.500C5 0.500 11 0 12.500 4C18 4 18.500 11 14 11Z" fill="#c8c8c8" stroke="#222" strokeWidth="1.200" />
        </svg>
      </button>
      <button aria-label="Network" className="mr-2 flex items-center">
        <svg viewBox="0 0 16 14" className="h-[14px] w-4" fill="none" stroke="#000" strokeWidth="1.100">
          <path d="M5 1.500H15.500V9.500H3.500V6M9.500 9.500V13M6 13.500H13M0.500 1H4.500V5.500H0.500ZM2.500 1V5M2.500 6V13" />
        </svg>
      </button>
      <button aria-label="Volume" className="mr-[9px] flex items-center">
        <svg viewBox="0 0 17 14" className="h-[14px] w-[17px]" fill="none" stroke="#000" strokeWidth="1.100">
          <path d="M0.500 4.500H3L6.500 1.500V12.500L3 9.500H0.500ZM9 5Q10.500 7 9 9M11.500 3.500Q14 7 11.500 10.500M14 2Q17.500 7 14 12" />
        </svg>
      </button>
      <button className="mr-4">ENG</button>
      <button className="flex w-[46px] flex-col items-center justify-center whitespace-nowrap">
        <span>6:27 PM</span>
        <span>1/2/2026</span>
      </button>
      <button aria-label="Notifications" className="ml-[21px] flex items-center">
        <svg viewBox="0 0 16 16" className="h-4 w-4" fill="none" stroke="#000" strokeWidth="1.100">
          <path d="M0.500 0.500H15.500V12.500H10.500L8 15L5.500 12.500H0.500Z" />
        </svg>
      </button>
      <button aria-label="Show desktop" className="ml-5 w-[5px] border-l border-[#b0b2b6]" />
    </footer>
  )
}

export default function App() {
  return (
    <div className="flex h-screen flex-col overflow-hidden bg-[#f0f0f0]">
      <TitleBar />
      <MenuBar />
      <Toolbar />
      <div className="h-[2px] border-t border-[#a0a0a0] bg-[#696969]" />
      <DocumentTabs />
      <main className="flex min-h-0 flex-1 border-r-2 border-l-2 border-r-[#f0f0f0] border-l-[#8a8a8a]">
        <ChildWindow icon={<TransistorIcon />}>
          <Schematic />
        </ChildWindow>
        <ChildWindow active icon={<PlotDocIcon />}>
          <Waveform />
        </ChildWindow>
      </main>
      <div className={`${UI} h-[22px] border-t-2 border-white text-[12px] leading-4 text-black`}>
        <p className="h-5 border-t border-[#d4d4d4] pt-[2px] pl-[2px]">Right-Click to manually enter Left Vertical Axis Limits [A]</p>
      </div>
      <Taskbar />
    </div>
  )
}
